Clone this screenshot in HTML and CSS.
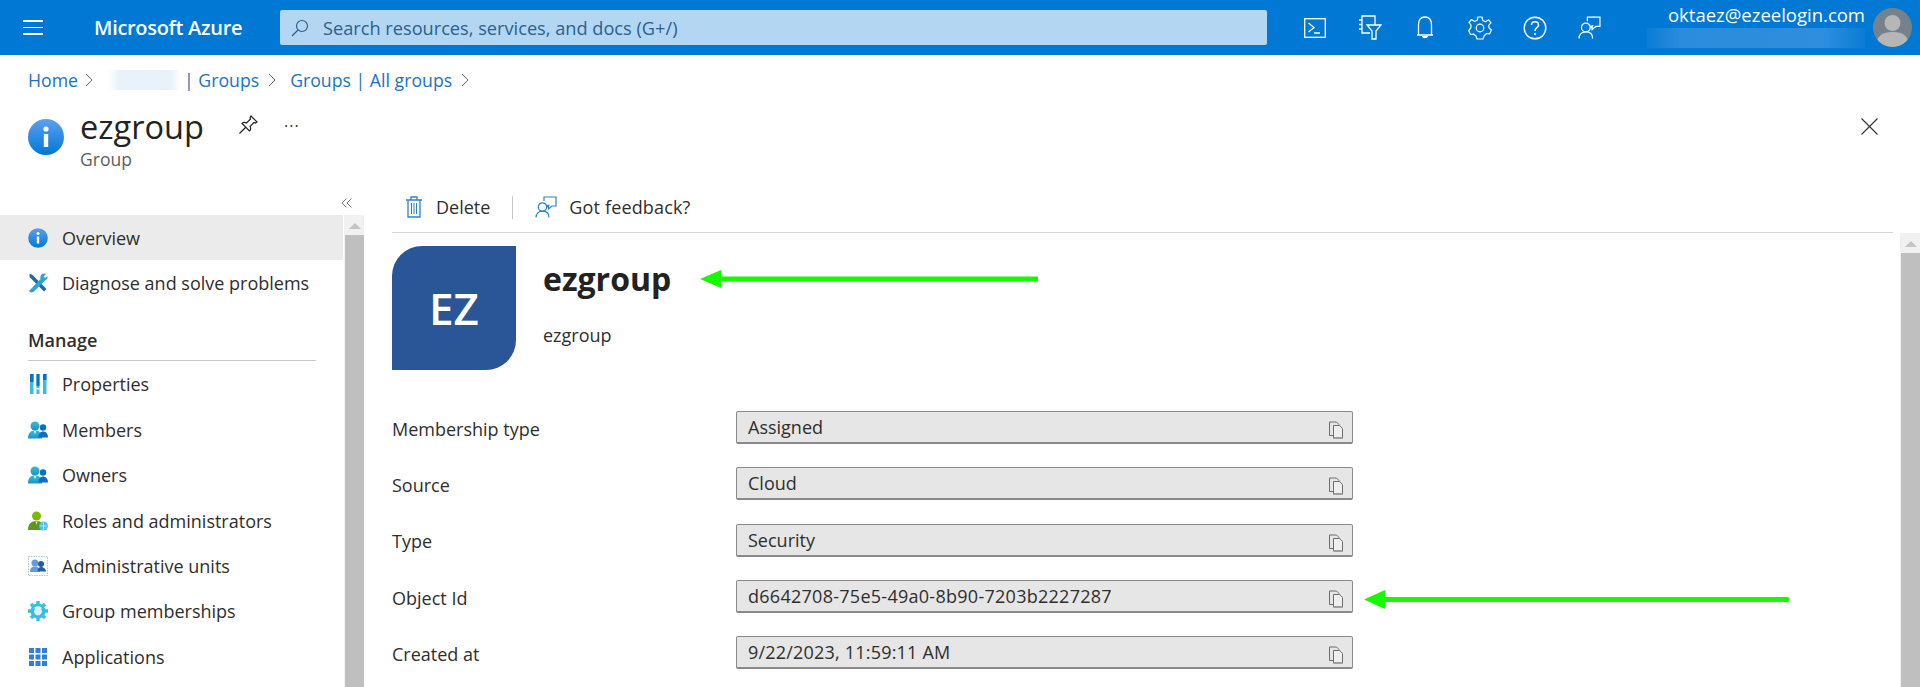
FILE: index.html
```html
<!DOCTYPE html>
<html lang="en">
<head>
<meta charset="utf-8">
<title>ezgroup - Microsoft Azure</title>
<link rel="stylesheet" href="styles.css">
</head>
<body>
<svg class="defs" width="0" height="0" aria-hidden="true">
  <defs>
    <linearGradient id="blueG" x1="0" y1="0" x2="0" y2="1"><stop offset="0" stop-color="#5ea0ef"/><stop offset="1" stop-color="#0078d4"/></linearGradient>
    <linearGradient id="cyanG" x1="0" y1="0" x2="0" y2="1"><stop offset="0" stop-color="#32bedd"/><stop offset="1" stop-color="#1b93c7"/></linearGradient>
    <symbol id="copy" viewBox="0 0 16 18">
      <path d="M5 14.5H1.5V1H8.5L11 3.5V4.5" fill="none" stroke="#6d6d6d" stroke-width="1"/>
      <path d="M5.5 4.5H11.5L14.5 7.5V17H5.5Z" fill="#efefef" stroke="#6d6d6d" stroke-width="1"/>
      <path d="M5.5 17H14.5" stroke="#9a9a9a" stroke-width="1.6"/>
    </symbol>
    <symbol id="feedback" viewBox="0 0 22 22">
      <path d="M9 5V1H21V10H17L13.5 13V10" fill="none" stroke="currentColor" stroke-width="1.2"/>
      <circle cx="7.5" cy="11" r="4.2" fill="none" stroke="currentColor" stroke-width="1.2"/>
      <path d="M1 21.500C1 17.500 3.500 15.200 7.500 15.200S14 17.500 14 21.500" fill="none" stroke="currentColor" stroke-width="1.2"/>
      <path d="M11 9.500L15 8.500L13 12Z" fill="currentColor"/>
    </symbol>
    <symbol id="people" viewBox="0 0 20 18">
      <circle cx="7" cy="5" r="4.500" fill="url(#cyanG)"/>
      <path d="M0 17.500C0 12 2.500 9.500 7 9.500S14 12 14 17.500Z" fill="url(#cyanG)"/>
      <path d="M5.800 10H8.200L7 13.500Z" fill="#d6f2fa"/>
      <circle cx="15" cy="6.500" r="3.200" fill="#0a6fc2"/>
      <path d="M10.500 16.500C10.500 12.500 12.500 10.500 15 10.500S20 12.500 20 16.500Z" fill="#0a6fc2"/>
    </symbol>
  </defs>
</svg>

<header class="topbar">
  <button class="menu-btn" aria-label="Menu"><span></span><span></span><span></span></button>
  <div class="brand">Microsoft Azure</div>
  <div class="search">
    <svg class="search-icon" viewBox="0 0 18 18" width="18" height="18"><circle cx="11" cy="7" r="5.500" fill="none" stroke="#2d5f8c" stroke-width="1.200"/><path d="M7 11L1 17" stroke="#2d5f8c" stroke-width="1.200"/></svg>
    <span>Search resources, services, and docs (G+/)</span>
  </div>
  <nav class="tools">
    <div class="tool"><svg viewBox="0 0 22 20" width="22" height="20"><rect x="0.700" y="0.700" width="20.600" height="18.600" fill="none" stroke="#fff" stroke-width="1.300"/><path d="M4.500 5L10 9.500L4.500 14M10 15H16" fill="none" stroke="#fff" stroke-width="1.300"/></svg></div>
    <div class="tool"><svg viewBox="0 0 24 25" width="24" height="25"><path d="M12 18H4V1H17V10M4 5H1M4 9.500H1M4 14H1" fill="none" stroke="#fff" stroke-width="1.300"/><path d="M9 10H23L18 16V24H14V16Z" fill="#0078d4" stroke="#fff" stroke-width="1.300"/></svg></div>
    <div class="tool"><svg viewBox="0 0 18 24" width="18" height="24"><path d="M2.500 19V9C2.500 4 5 1 9 1S15.500 4 15.500 9V19M1 19H17" fill="none" stroke="#fff" stroke-width="1.300"/><path d="M6 20C6 23 12 23 12 20Z" fill="#fff"/></svg></div>
    <div class="tool"><svg viewBox="0 0 24 24" width="24" height="24"><circle cx="12" cy="12" r="3.800" fill="none" stroke="#fff" stroke-width="1.200"/><path d="M10 1H14L14.800 4.500L17.600 5.700L20.600 3.800L23 6.800L20.600 9.300L21.200 12L23.400 14L21.500 18L18.500 17.500L16 20L15 23H9L8 20L5.500 18L2.500 18.500L.700 14.500L2.800 12L3 9L1 6.500L3.500 3.500L6.500 5.500L9.200 4.300Z" fill="none" stroke="#fff" stroke-width="1.200" stroke-linejoin="round"/></svg></div>
    <div class="tool"><svg viewBox="0 0 24 24" width="24" height="24"><circle cx="12" cy="12" r="10.800" fill="none" stroke="#fff" stroke-width="1.400"/><path d="M8.500 9C8.500 4.800 15.500 4.800 15.500 9C15.500 11.800 12 11.500 12 15" fill="none" stroke="#fff" stroke-width="1.500"/><circle cx="12" cy="18" r="1.100" fill="#fff"/></svg></div>
    <div class="tool tool-feedback"><svg width="23" height="23"><use href="#feedback"/></svg></div>
  </nav>
  <div class="account">
    <div class="account-text">
      <div class="email">oktaez@ezeelogin.com</div>
      <div class="tenant-blur"></div>
    </div>
    <svg class="avatar" viewBox="0 0 39 39" width="39" height="39"><defs><clipPath id="av"><circle cx="19.500" cy="19.500" r="19.500"/></clipPath></defs><circle cx="19.500" cy="19.500" r="19.500" fill="#75828c"/><g clip-path="url(#av)"><circle cx="19.500" cy="15" r="8" fill="#b6b6b6"/><path d="M3 39C3 28 9 24 19.500 24S36 28 36 39Z" fill="#b6b6b6"/></g></svg>
  </div>
</header>

<nav class="crumbs">
  <a>Home</a><svg class="chev chev-first" viewBox="0 0 8 14" width="8" height="14"><path d="M1 1L7 7L1 13" fill="none" stroke="#6b6b6b"/></svg>
  <span class="crumb-blur"></span><a class="crumb-after">| Groups</a><svg class="chev" viewBox="0 0 8 14" width="8" height="14"><path d="M1 1L7 7L1 13" fill="none" stroke="#6b6b6b"/></svg>
  <a>Groups | All groups</a><svg class="chev" viewBox="0 0 8 14" width="8" height="14"><path d="M1 1L7 7L1 13" fill="none" stroke="#6b6b6b"/></svg>
</nav>

<section class="page-head">
  <svg class="head-icon" viewBox="0 0 36 36" width="36" height="36"><circle cx="18" cy="18" r="18" fill="url(#blueG)"/><circle cx="18" cy="10" r="2.600" fill="#fff"/><rect x="15.800" y="15" width="4.400" height="13" fill="#fff"/></svg>
  <div class="head-text">
    <h1>ezgroup</h1>
    <div class="head-sub">Group</div>
  </div>
  <svg class="pin" viewBox="0 0 20 20" width="20" height="20"><path d="M13 1L19 7L17.500 8L16 7.500L12 11.500C13 13 12.500 15 11.500 16L4 8.500C5 7.500 7 7 8.500 8L12.500 4L12 2.500ZM7.500 12.500L1.500 18.500" fill="none" stroke="#222" stroke-width="1.200"/></svg>
  <div class="more">···</div>
  <svg class="close" viewBox="0 0 17 17" width="17" height="17"><path d="M.5 .5L16.500 16.500M16.500 .5L.5 16.500" stroke="#333" stroke-width="1.100"/></svg>
</section>

<div class="blade">
  <aside class="side">
    <div class="collapse"><svg viewBox="0 0 11 10" width="11" height="10"><path d="M5.500 .5L1 5L5.500 9.500M10.500 .5L6 5L10.500 9.500" fill="none" stroke="#777" stroke-width="1"/></svg></div>
    <div class="side-body">
      <ul class="menu">
        <li class="item active"><svg class="mi" viewBox="0 0 20 20" width="20" height="20"><circle cx="10" cy="10" r="9.800" fill="url(#blueG)"/><circle cx="10" cy="5.500" r="1.500" fill="#fff"/><rect x="8.800" y="8.500" width="2.400" height="7" fill="#fff"/></svg>Overview</li>
        <li class="item"><svg class="mi" viewBox="0 0 20 20" width="20" height="20"><path d="M1.500 1L4 1.500L18.500 16L16 18.500L1.500 4Z" fill="#1d6aa5"/><path d="M14 1C16 0 17.500 .5 18 1L15.500 3.500L17 5L19.500 3C19.800 5 19 7 17 7.500L6 18.500C4 20 1.500 19.500 1 18L12.500 6C12 4 12.500 2 14 1Z" fill="#2aa3d9"/></svg>Diagnose and solve problems</li>
        <li class="section">Manage</li>
        <li class="item"><svg class="mi" viewBox="0 0 20 20" width="20" height="20"><rect x="2" y="0" width="3.500" height="20" fill="#36bde0"/><rect x="2" y="0" width="3.500" height="8" fill="#0a72c5"/><rect x="8.500" y="0" width="3" height="20" fill="#36bde0"/><rect x="8.500" y="0" width="3" height="12" fill="#0a72c5"/><rect x="8.500" y="14" width="3" height="1.500" fill="#fff"/><rect x="15" y="0" width="3.500" height="20" fill="#36bde0"/><rect x="15" y="0" width="3.500" height="6" fill="#0a72c5"/></svg>Properties</li>
        <li class="item"><svg class="mi" width="20" height="18"><use href="#people"/></svg>Members</li>
        <li class="item"><svg class="mi" width="20" height="18"><use href="#people"/></svg>Owners</li>
        <li class="item"><svg class="mi" viewBox="0 0 20 20" width="20" height="20"><circle cx="8.500" cy="5" r="4.500" fill="#7fb900"/><path d="M0 19C0 13 3 10 8.500 10S15 13 15 19Z" fill="#5e9624"/><path d="M7.500 10.500H9.500L8.500 14Z" fill="#e8f3d0"/><circle cx="15.500" cy="15" r="4.500" fill="#4dc3e8"/><path d="M12 15H19M15.500 11V19" stroke="#bfeaf7" stroke-width=".8"/></svg>Roles and administrators</li>
        <li class="item"><svg class="mi" viewBox="0 0 20 20" width="20" height="20"><rect x=".5" y=".5" width="19" height="19" fill="none" stroke="#6fa9cc" stroke-width=".6" stroke-dasharray="1.500 1"/><circle cx="7" cy="7" r="3.500" fill="#5e9ce6"/><path d="M2 16C2 12 4 10.500 7 10.500S12 12 12 16Z" fill="#5e9ce6"/><circle cx="13" cy="8" r="3" fill="#1f5fa8"/><path d="M9.500 15.500C9.500 12.500 11 11 13 11S18 12.500 18 15.500Z" fill="#1f5fa8"/></svg>Administrative units</li>
        <li class="item"><svg class="mi" viewBox="0 0 20 20" width="20" height="20"><circle cx="10" cy="10" r="7.500" fill="#34bfe3"/><path d="M10 0V20M0 10H20M3 3L17 17M17 3L3 17" stroke="#34bfe3" stroke-width="3.400"/><circle cx="10" cy="10" r="4.800" fill="#d9f4fb"/><path d="M13.500 7.500A4.600 4.600 0 1 1 6.500 7.500" fill="none" stroke="#34bfe3" stroke-width="1.500"/></svg>Group memberships</li>
        <li class="item"><svg class="mi" viewBox="0 0 20 20" width="20" height="20"><path d="M1 1H6V6H1ZM7.500 1H12.500V6H7.500ZM14 1H19V6H14ZM1 7.500H6V12.500H1ZM7.500 7.500H12.500V12.500H7.500ZM14 7.500H19V12.500H14ZM1 14H6V19H1ZM7.500 14H12.500V19H7.500ZM14 14H19V19H14Z" fill="#2f80dc"/></svg>Applications</li>
      </ul>
      <div class="scroll"><div class="scroll-up"></div><div class="scroll-thumb"></div></div>
    </div>
  </aside>

  <main class="main">
    <div class="toolbar">
      <button class="cmd"><svg viewBox="0 0 18 22" width="18" height="22"><path d="M1 4H17M6 4V1H12V4M3 4V21H15V4" fill="none" stroke="#2a82cc" stroke-width="1.300"/><path d="M6.500 7V18M9 7V18M11.500 7V18" stroke="#2a82cc" stroke-width="1"/></svg>Delete</button>
      <span class="cmd-sep"></span>
      <button class="cmd cmd-feedback"><svg width="22" height="22"><use href="#feedback"/></svg>Got feedback?</button>
    </div>
    <div class="main-body">
      <div class="content">
        <div class="hero">
          <div class="tile">EZ</div>
          <div class="hero-text">
            <div class="hero-title-row">
              <h2>ezgroup</h2>
              <svg class="arrow arrow-top" viewBox="0 0 338 18" width="338" height="18"><path d="M0 9L21 0V6.500H338V11.500H21V18Z" fill="#16fa00"/></svg>
            </div>
            <div class="hero-sub">ezgroup</div>
          </div>
        </div>
        <div class="fields">
          <div class="field"><label>Membership type</label><div class="value"><span>Assigned</span><svg class="copy" width="16" height="18"><use href="#copy"/></svg></div></div>
          <div class="field"><label>Source</label><div class="value"><span>Cloud</span><svg class="copy" width="16" height="18"><use href="#copy"/></svg></div></div>
          <div class="field"><label>Type</label><div class="value"><span>Security</span><svg class="copy" width="16" height="18"><use href="#copy"/></svg></div></div>
          <div class="field field-id"><label>Object Id</label><div class="value"><span class="value-id">d6642708-75e5-49a0-8b90-7203b2227287</span><svg class="copy" width="16" height="18"><use href="#copy"/></svg></div>
            <svg class="arrow arrow-id" viewBox="0 0 426 19" width="426" height="19"><path d="M0 9.500L21 0V7H423A2.500 2.500 0 0 1 423 12H21V19Z" fill="#16fa00"/></svg>
          </div>
          <div class="field"><label>Created at</label><div class="value"><span class="value-date">9/22/2023, 11:59:11 AM</span><svg class="copy" width="16" height="18"><use href="#copy"/></svg></div></div>
        </div>
      </div>
      <div class="scroll scroll-main"><div class="scroll-up"></div><div class="scroll-thumb"></div></div>
    </div>
  </main>
</div>
</body>
</html>
```
FILE: styles.css
```css
* { box-sizing: border-box; }
html, body { margin: 0; padding: 0; height: 687px; overflow: hidden; background: #fff; }
body { font-family: "Open Sans", "Noto Sans", "Liberation Sans", sans-serif; color: #2f2e2d; font-size: 18px; }
.defs { position: absolute; }
h1, h2 { margin: 0; }
ul { margin: 0; padding: 0; list-style: none; }
button { background: none; border: 0; padding: 0; font: inherit; color: inherit; }

.topbar { display: flex; align-items: center; height: 55px; background: #0078d4; color: #fff; }
.menu-btn { display: flex; flex-direction: column; gap: 5px; width: 20px; margin-left: 23px; }
.menu-btn span { display: block; height: 1.500px; background: #fff; }
.brand { width: 186px; margin-left: 51px; font-size: 20px; font-weight: 600; letter-spacing: -.3px; white-space: nowrap; }
.search { display: flex; align-items: center; gap: 14px; width: 987px; height: 35px; padding-left: 11px; background: #b3d7f2; border-radius: 2px; color: #2d5f8c; font-size: 18.200px; }
.tools { display: flex; margin-left: 20px; }
.tool { display: flex; align-items: center; justify-content: center; width: 55px; height: 55px; }
.tool-feedback { color: #fff; }
.account { flex: 1; display: flex; justify-content: flex-end; align-items: center; gap: 8px; padding-right: 8px; }
.account-text { display: flex; flex-direction: column; align-items: flex-end; }
.email { font-size: 18.500px; line-height: 20px; margin-top: -2px; white-space: nowrap; }
.tenant-blur { width: 218px; height: 20px; margin-top: 3px; background: linear-gradient(90deg, #0a7dd6, #2b8bdc 15%, #2f8fde 80%, #0a7dd6); }
.avatar { display: block; }

.crumbs { display: flex; align-items: center; height: 51px; padding: 0 0 2px 28px; color: #1a74bd; font-size: 17.700px; }
.crumbs a { white-space: nowrap; }
.chev { margin: 0 14px 0 9px; }
.chev-first { margin: 0 15px 0 7px; }
.crumb-blur { width: 73px; height: 20px; background: linear-gradient(90deg, #fff, #e9f2fa 15%, #e9f2fa 85%, #fff); }
.crumb-after { margin-left: 3px; }

.page-head { display: flex; height: 84px; padding-left: 28px; }
.head-icon { margin-top: 13px; }
.head-text { width: 158px; margin-left: 16px; }
h1 { font-size: 32.500px; line-height: 40px; font-weight: 500; color: #222; padding-top: 1px; }
.head-sub { font-size: 17.500px; line-height: 22px; color: #605e5c; margin-top: 1px; }
.pin { margin-top: 9px; }
.more { margin: 5px 0 0 26px; font-size: 16px; line-height: 30px; letter-spacing: 1px; color: #333; }
.close { margin: 12px 42px 0 auto; }

.blade { display: flex; }
.side { width: 364px; flex: none; }
.collapse { display: flex; align-items: center; justify-content: flex-end; height: 25px; padding-right: 12px; }
.side-body { display: flex; height: 472px; }
.menu { flex: 1; }
.item { display: flex; align-items: center; gap: 14px; height: 45.400px; padding-left: 28px; white-space: nowrap; }
.mi { flex: none; width: 20px; }
.item.active { background: #ebebeb; }
.section { height: 45px; margin: 10px 27px 0 28px; padding-top: 12px; font-weight: 600; line-height: 24px; border-bottom: 1px solid #c8c8c8; }
.section + .item { margin-top: 1px; }

.scroll { width: 21px; flex: none; background: #f1f1f1; border-left: 1px solid #fff; padding-left: 1px; }
.scroll-up { width: 0; height: 0; margin: 8px auto 6px; border-left: 6px solid transparent; border-right: 6px solid transparent; border-bottom: 6px solid #c4c4c4; }
.scroll-thumb { height: 100%; background: #bfbfbf; }

.main { flex: 1; min-width: 0; padding-left: 28px; }
.toolbar { display: flex; align-items: center; height: 43px; margin-right: 27px; padding: 0 0 8px 13px; border-bottom: 1px solid #d6d6d6; }
.cmd { display: flex; align-items: center; gap: 13px; white-space: nowrap; }
.cmd-sep { width: 1px; height: 23px; margin: 0 22px; background: #c8c8c8; }
.cmd-feedback { color: #2f2e2d; gap: 12px; letter-spacing: .15px; }
.cmd-feedback svg { color: #2a82cc; }

.main-body { display: flex; height: 455px; }
.content { flex: 1; min-width: 0; padding-top: 13px; }
.scroll-main { margin-left: 7px; }
.hero { display: flex; }
.tile { display: flex; align-items: center; justify-content: center; width: 124px; height: 124px; background: #2a5697; border-radius: 30px 0 30px 0; color: #fff; font-size: 44px; font-weight: 600; }
.hero-text { margin-left: 27px; }
.hero-title-row { display: flex; align-items: center; height: 66px; }
h2 { font-size: 32px; line-height: 40px; font-weight: 700; color: #222; }
.hero-sub { margin-top: 12px; line-height: 22px; }
.arrow { display: block; flex: none; }
.arrow-top { margin-left: 29px; }
.fields { display: flex; flex-direction: column; gap: 23.250px; margin-top: 41px; }
.field { display: flex; align-items: center; height: 33px; }
.field label { width: 344px; flex: none; padding-top: 2px; }
.field-id label { padding-top: 3px; }
.value { display: flex; align-items: center; justify-content: space-between; width: 617px; height: 33px; padding: 0 8px 0 11px; background: #e6e6e6; border: 1px solid #8a8a8a; border-bottom-width: 2px; border-radius: 2px; }
.value-id { letter-spacing: .27px; }
.value-date { letter-spacing: .2px; }
.copy { margin-top: 6px; flex: none; }
.arrow-id { margin: 7px 0 0 11px; }
```
